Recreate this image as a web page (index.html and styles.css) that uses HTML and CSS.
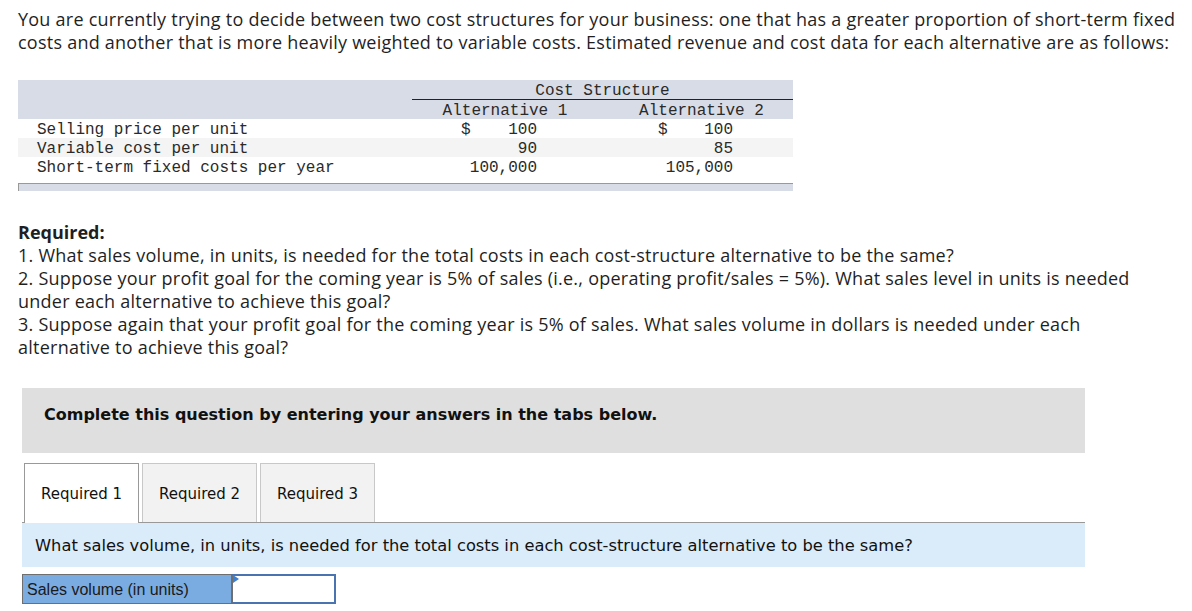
FILE: index.html
```html
<!DOCTYPE html>
<html>
<head>
<meta charset="utf-8">
<link rel="stylesheet" href="styles.css">
</head>
<body>
<div class="page">
  <p class="intro">You are currently trying to decide between two cost structures for your business: one that has a greater proportion of short-term fixed costs and another that is more heavily weighted to variable costs. Estimated revenue and cost data for each alternative are as follows:</p>

  <div class="data">
    <div class="head">
      <div class="head-row1">
        <div class="lbl"></div>
        <div class="span2">Cost Structure</div>
      </div>
      <div class="head-row2">
        <div class="lbl"></div>
        <div class="alt">Alternative 1</div>
        <div class="alt">Alternative 2</div>
      </div>
    </div>
    <div class="row">
      <div class="lbl">Selling price per unit</div>
      <div class="val"><span class="cur">$</span><span class="num">100</span></div>
      <div class="val"><span class="cur">$</span><span class="num">100</span></div>
    </div>
    <div class="row alt-bg">
      <div class="lbl">Variable cost per unit</div>
      <div class="val"><span class="cur"></span><span class="num">90</span></div>
      <div class="val"><span class="cur"></span><span class="num">85</span></div>
    </div>
    <div class="row">
      <div class="lbl">Short-term fixed costs per year</div>
      <div class="val"><span class="cur"></span><span class="num">100,000</span></div>
      <div class="val"><span class="cur"></span><span class="num">105,000</span></div>
    </div>
    <div class="foot"></div>
  </div>

  <div class="required">
    <div class="req-title">Required:</div>
    <div>1. What sales volume, in units, is needed for the total costs in each cost-structure alternative to be the same?</div>
    <div>2. Suppose your profit goal for the coming year is 5% of sales (i.e., operating profit/sales = 5%). What sales level in units is needed under each alternative to achieve this goal?</div>
    <div>3. Suppose again that your profit goal for the coming year is 5% of sales. What sales volume in dollars is needed under each alternative to achieve this goal?</div>
  </div>

  <div class="complete">Complete this question by entering your answers in the tabs below.</div>

  <div class="tabs">
    <div class="tab active">Required 1</div>
    <div class="tab">Required 2</div>
    <div class="tab">Required 3</div>
  </div>
  <div class="banner">What sales volume, in units, is needed for the total costs in each cost-structure alternative to be the same?</div>

  <div class="answer">
    <div class="ans-label">Sales volume (in units)</div>
    <div class="ans-input"><span class="flag"></span></div>
  </div>
</div>
</body>
</html>
```

FILE: styles.css
```css
* { box-sizing: border-box; }
html, body { margin: 0; padding: 0; background: #fff; }
body { width: 1192px; height: 611px; overflow: hidden; }

.page { padding: 8px 0 0 18px; color: #1f1f1f; }

.intro {
  margin: 0;
  font-family: "Open Sans", sans-serif;
  font-size: 18px;
  line-height: 23px;
  width: 1172px;
  letter-spacing: 0.24px;
}

.data {
  margin-top: 26px;
  width: 775px;
  font-family: "Liberation Mono", monospace;
  font-size: 16px;
  color: #2a2a2a;
}
.head { background: #d8dce6; }
.head-row1, .head-row2, .row { display: flex; height: 19px; line-height: 23px; }
.head-row1 { height: 20px; line-height: 22px; }
.lbl { width: 394px; flex: none; padding-left: 19px; white-space: nowrap; }
.span2 { flex: 1; text-align: center; border-bottom: 1px solid #222; }
.alt { width: 186px; flex: none; text-align: center; }
.alt + .alt { width: 195px; padding-left: 12px; }
.row { background: #fff; }
.row.alt-bg { background: #f4f4f4; }
.val { width: 195px; flex: none; display: flex; padding-left: 49px; padding-right: 70px; }
.val + .val { width: 186px; padding-left: 51px; padding-right: 60px; }
.cur { flex: none; }
.num { margin-left: auto; }
.foot {
  margin-top: 7px;
  height: 8px;
  background: #d8dce6;
  border-top: 1px solid #999;
  border-left: 1px solid #999;
}

.required {
  margin-top: 30px;
  font-family: "Open Sans", sans-serif;
  font-size: 18px;
  line-height: 23px;
  width: 1150px;
  letter-spacing: 0.24px;
}
.req-title { font-weight: bold; letter-spacing: 0; }

.complete {
  margin: 29px 0 0 4px;
  width: 1063px;
  height: 65px;
  background: #dfdfdf;
  padding-left: 22px;
  font-family: "DejaVu Sans", Verdana, sans-serif;
  font-weight: bold;
  font-size: 16px;
  line-height: 54px;
  color: #111;
}

.tabs { display: flex; gap: 3px; margin: 10px 0 0 6px; height: 59px; }
.tab {
  width: 115px;
  height: 59px;
  background: #f2f2f2;
  border: 1px solid #c8c8c8;
  border-bottom: none;
  text-align: center;
  line-height: 61px;
  font-family: "DejaVu Sans", Verdana, sans-serif;
  font-size: 15px;
  color: #111;
}
.tab.active { background: #fff; border-color: #999; position: relative; z-index: 1; height: 60px; }

.banner {
  margin-left: 4px;
  width: 1063px;
  height: 45px;
  background: #daebf9;
  border-top: 1px solid #999;
  padding-left: 13px;
  line-height: 46px;
  font-family: "DejaVu Sans", Verdana, sans-serif;
  font-size: 16.3px;
  color: #111;
}

.answer { display: flex; margin: 7px 0 0 4px; height: 30px; }
.ans-label {
  width: 209px;
  background: #7aace2;
  border: 1px solid #6f6f6f;
  border-right: none;
  padding-left: 4px;
  line-height: 30px;
  font-family: "Liberation Sans", Arial, sans-serif;
  font-size: 16px;
  color: #1a1a1a;
}
.ans-input {
  width: 105px;
  background: #fff;
  border: 2px solid #4a74b0;
  border-left: 2px solid #6f6f6f;
  position: relative;
}
.flag {
  position: absolute;
  left: 0;
  top: -1px;
  width: 0; height: 0;
  border-top: 4px solid transparent;
  border-bottom: 4px solid transparent;
  border-left: 6px solid #3f7fd0;
}
```
